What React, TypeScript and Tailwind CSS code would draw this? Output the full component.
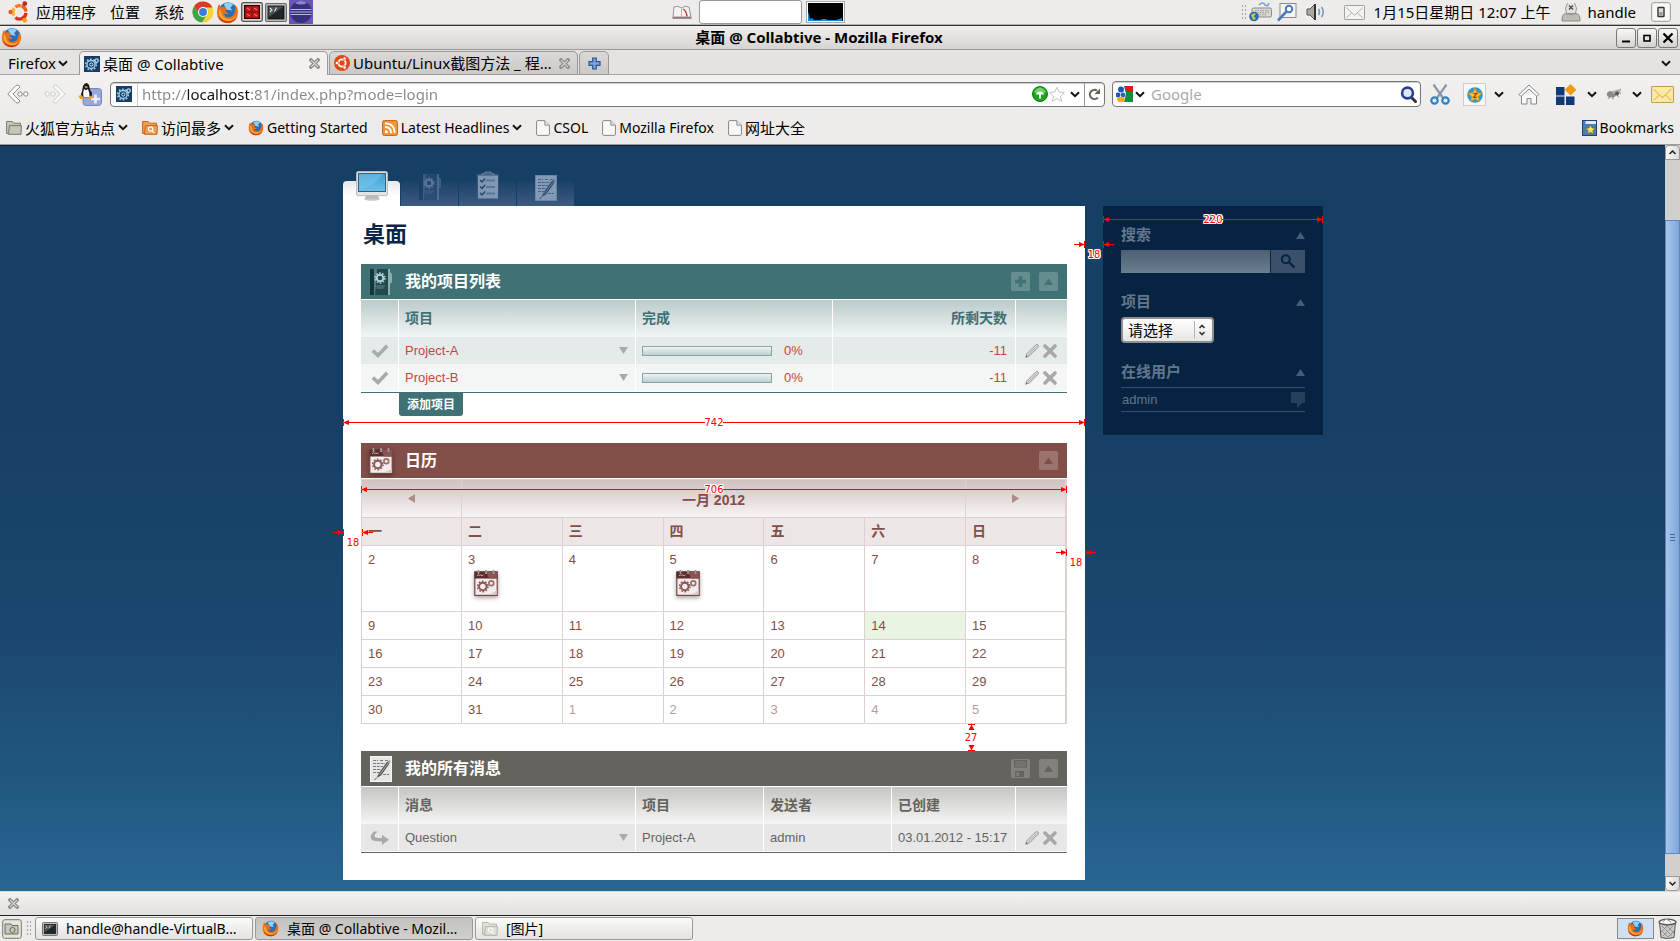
import { useState } from "react";
import type { ReactNode } from "react";

const UI = "font-['Noto_Sans','Noto_Sans_CJK_SC',sans-serif]";
const WEB = "font-['Liberation_Sans','Noto_Sans_CJK_SC',sans-serif]";

/* ---------- desktop and browser icons ---------- */

function Chevron({ label }: { label?: string }) {
  return (
    <svg width="10" height="7" viewBox="0 0 10 7" fill="none" stroke="#111" strokeWidth="2" className="shrink-0" aria-label={label}>
      <path d="M1 1.2 L5 5.2 L9 1.2" />
    </svg>
  );
}

function FirefoxIcon({ size }: { size: number }) {
  return (
    <svg width={size} height={size} viewBox="0 0 24 24" className="shrink-0">
      <circle cx="12.5" cy="11" r="9.8" fill="#2a6db5" />
      <path d="M8 3 Q13 0.5 18 3.4 L15 7 L17 10 L11 9 Z" fill="#8fd0f3" />
      <path d="M2.2 5 Q1.3 8 1 12 Q1.2 22.8 12 23 Q22.8 22.6 23 11.5 Q22.8 6.5 20 3.6 Q21.2 8 19.6 11 Q18.6 16.8 13 17 Q8.6 16.6 8.4 13 Q11 14.6 13.4 12.6 Q10.8 12.4 9.6 10.4 L12 8.4 Q9.6 7.8 8.4 6 Q6 5.6 5.2 6.6 Q4 6.4 3.8 3.2 Z" fill="#e8701a" />
      <path d="M2.8 9 Q2 19 11.5 20.8 Q19.5 21 21.6 13 Q18.6 19.4 12.6 18.8 Q6.5 18 5.6 11.6 Q4.6 8 2.8 9 Z" fill="#f9a72b" />
      <path d="M2 15 Q4.6 22.6 12 23 Q18.5 22.8 21.4 18 Q17 22 11 21 Q5 20 2 15 Z" fill="#c23c12" />
    </svg>
  );
}

function UbuntuMark({ size, mono }: { size: number; mono?: boolean }) {
  if (mono) {
    return (
      <svg width={size} height={size} viewBox="0 0 16 16" className="shrink-0">
        <circle cx="8" cy="8" r="8" fill="#dd4814" />
        <circle cx="8" cy="8" r="3.6" fill="none" stroke="#fff" strokeWidth="1.8" />
        <g fill="#fff" stroke="#dd4814" strokeWidth="0.7">
          <circle cx="2.9" cy="8" r="1.7" />
          <circle cx="10.6" cy="3.5" r="1.7" />
          <circle cx="10.6" cy="12.5" r="1.7" />
        </g>
      </svg>
    );
  }
  return (
    <svg width={size} height={size} viewBox="0 0 24 24" className="shrink-0">
      <g fill="none" strokeWidth="3.6">
        <path d="M8 6.6 A7 7 0 0 1 14.5 5.4" stroke="#f47a20" />
        <path d="M6.6 16 A7 7 0 0 1 6.8 8" stroke="#f9b233" />
        <path d="M19.6 13 A7 7 0 0 1 8 18" stroke="#d9341a" />
        <path d="M15 5.6 A7 7 0 0 1 19.6 11.6" stroke="#e8601c" />
      </g>
      <circle cx="2.8" cy="12" r="2.4" fill="#e8601c" />
      <circle cx="18.3" cy="2.9" r="2.6" fill="#c0282d" />
      <circle cx="18.3" cy="21" r="2.6" fill="#f9a51a" />
    </svg>
  );
}

function ChromeIcon() {
  return (
    <svg width="22" height="22" viewBox="0 0 22 22" className="shrink-0">
      <circle cx="11" cy="11" r="10.5" fill="#f6d33c" />
      <path d="M2 5.5 A10.5 10.5 0 0 1 20.5 6.5 L11 6.5 L7 13 Z" fill="#d93a2b" />
      <path d="M1.9 5.6 A10.5 10.5 0 0 0 10 21.5 L14.5 14 L7.2 13.4 Z" fill="#3aa648" />
      <circle cx="11" cy="11" r="5" fill="#fff" />
      <circle cx="11" cy="11" r="4" fill="#3b7ddd" />
    </svg>
  );
}

function RedGridIcon() {
  return (
    <svg width="22" height="20" viewBox="0 0 22 20" className="shrink-0">
      <rect x="0.7" y="0.7" width="20.6" height="18.6" rx="1.5" fill="#d5d3cf" stroke="#555" strokeWidth="1.3" />
      <rect x="3.5" y="3.5" width="15" height="13" fill="#7d0e10" stroke="#300" />
      <g fill="#c8181c">
        <rect x="4.5" y="4.5" width="6" height="5" />
        <rect x="11.5" y="4.5" width="6" height="5" />
        <rect x="4.5" y="10.5" width="6" height="5" />
        <rect x="11.5" y="10.5" width="6" height="5" />
      </g>
      <path d="M6 6 l3 2 M13 6 l3 2 M6 12 l3 2 M13 12 l3 2" stroke="#f4a0a0" strokeWidth="0.8" />
    </svg>
  );
}

function TerminalIcon({ width }: { width: number }) {
  return (
    <svg width={width} height={Math.round(width * 0.86)} viewBox="0 0 22 19" className="shrink-0">
      <rect x="0.7" y="0.7" width="20.6" height="17.6" rx="1" fill="#d8d8d6" stroke="#666" strokeWidth="1.3" />
      <rect x="3" y="3" width="16" height="13" fill="#20272a" stroke="#111" />
      <path d="M3.5 3.5 H18.5 L3.5 14 Z" fill="#4a5357" />
      <path d="M5 5 l2 2 l-2 2 M9.5 8.5 l2 -4" stroke="#e8e8e8" strokeWidth="1.1" fill="none" />
    </svg>
  );
}

function EclipseIcon() {
  return (
    <svg width="24" height="24" viewBox="0 0 24 24" className="shrink-0">
      <rect width="24" height="24" fill="#6d55b8" />
      <circle cx="12" cy="12" r="11" fill="#37307a" />
      <path d="M1.5 9.5 h21 M1 12 h22 M1.5 14.5 h21" stroke="#b8b4e8" strokeWidth="1.1" />
      <path d="M6 3 Q12 -1 18 3 Q12 6 6 3" fill="#8f86d0" />
    </svg>
  );
}

function Favicon() {
  return (
    <svg width="16" height="16" viewBox="0 0 16 16" className="shrink-0">
      <rect width="16" height="16" fill="#1c3a66" />
      <circle cx="7" cy="8.5" r="4" fill="none" stroke="#8fd0ea" strokeWidth="1.4" />
      <circle cx="7" cy="8.5" r="5.3" fill="none" stroke="#8fd0ea" strokeWidth="1.6" strokeDasharray="1.8 1.53" />
      <circle cx="7.3" cy="8.5" r="1.6" fill="none" stroke="#d8f2fb" />
      <circle cx="12.6" cy="4.6" r="1.7" fill="none" stroke="#a8e0f2" strokeWidth="1.3" />
    </svg>
  );
}

function CloseGlyph({ size }: { size: number }) {
  return (
    <svg width={size} height={size} viewBox="0 0 11 11" className="shrink-0">
      <path d="M2 2 L9 9 M9 2 L2 9" stroke="#8a8a88" strokeWidth="3.6" strokeLinecap="square" />
      <path d="M2 2 L9 9 M9 2 L2 9" stroke="#cfcfcd" strokeWidth="1.3" />
    </svg>
  );
}

function MailIcon({ width, height, fill, stroke, line }: { width: number; height: number; fill: string; stroke: string; line: string }) {
  return (
    <svg width={width} height={height} viewBox="0 0 22 16" preserveAspectRatio="none" className="shrink-0">
      <rect x="0.5" y="0.5" width="21" height="15" rx="0.8" fill={fill} stroke={stroke} />
      <path d="M2.5 3 L11 11 L19.5 3 M2.5 13.5 L8 8.5 M19.5 13.5 L14 8.5" fill="none" stroke={line} />
    </svg>
  );
}

function GripDots() {
  return <span className="h-[17px] w-[5px] shrink-0 bg-[radial-gradient(#aaa_30%,transparent_35%)] bg-[size:3px_4px]" />;
}

function FolderIcon({ color, edge, mark }: { color: string; edge: string; mark?: boolean }) {
  return (
    <svg width="16" height="15" viewBox="0 0 16 15" className="shrink-0">
      <path d="M0.6 13.5 V1.5 H6.2 L7.5 3.2 H14.5 V13.5 Z" fill={color} stroke={edge} />
      <path d="M2.5 14.3 L3.4 5.6 H15.4 L15 14.3 Z" fill={color} stroke={edge} />
      {mark && (
        <g fill="none" stroke="#fff" strokeWidth="1.2">
          <circle cx="8.6" cy="9" r="2.2" />
          <path d="M10.2 10.8 L12.2 13" />
        </g>
      )}
    </svg>
  );
}

function PageIcon() {
  return (
    <svg width="14" height="16" viewBox="0 0 14 16" className="shrink-0">
      <path d="M0.6 1.8 Q0.6 0.6 1.8 0.6 H8.8 L13.4 5.2 V14.2 Q13.4 15.4 12.2 15.4 H1.8 Q0.6 15.4 0.6 14.2 Z" fill="#f8f8f8" stroke="#888" />
      <path d="M8.8 0.6 V5.2 H13.4" fill="#dcdcdc" stroke="#999" />
    </svg>
  );
}

/* ---------- dashboard icons ---------- */

function MonitorIcon() {
  return (
    <svg width="32" height="30" viewBox="0 0 32 30" className="shrink-0">
      <defs>
        <linearGradient id="scr" x1="0" y1="0" x2="0" y2="1">
          <stop offset="0" stopColor="#3f9fd2" />
          <stop offset="1" stopColor="#6bc0ea" />
        </linearGradient>
      </defs>
      <ellipse cx="16" cy="28" rx="8" ry="1.8" fill="#c9c9c9" />
      <path d="M10.5 24 H21.5 L23.5 27.6 H8.5 Z" fill="#b9b9b9" />
      <rect x="0.6" y="0.6" width="30.8" height="24" rx="1.5" fill="#e3e3e1" stroke="#b9bcbe" />
      <rect x="2.5" y="2.5" width="27" height="18" fill="url(#scr)" stroke="#35607c" />
      <path d="M3 18 Q18 16 27 3 H3 Z" fill="#86cdf0" opacity="0.4" />
    </svg>
  );
}

function BinderIcon({ dim }: { dim?: boolean }) {
  return (
    <svg width="24" height="28" viewBox="0 0 24 28" className="shrink-0" opacity={dim ? 0.75 : 1}>
      <rect x="1" y="1" width="19" height="26" fill={dim ? "#284c72" : "#24484b"} />
      <path d="M1 1 H5 V27 H1 Z" fill={dim ? "#1c3d62" : "#15373a"} />
      <path d="M5 1 H8 L6 27 H5 Z" fill={dim ? "#46658a" : "#56807f"} />
      <rect x="19" y="1" width="2" height="26" fill={dim ? "#58749a" : "#86b0b0"} />
      <path d="M21 4 L23 6 V14 L21 16 Z" fill={dim ? "#47678e" : "#86b0b0"} />
      <circle cx="11" cy="10" r="3.3" fill="none" stroke={dim ? "#6d89ab" : "#a9d0d2"} strokeWidth="2" />
      <circle cx="11" cy="10" r="4.9" fill="none" stroke={dim ? "#6d89ab" : "#a9d0d2"} strokeWidth="1.5" strokeDasharray="1.7 1.38" />
      <path d="M6 18 h10 M7.5 20 h7" stroke={dim ? "#4c6c92" : "#5f8b8d"} />
    </svg>
  );
}

function ClipboardIcon() {
  return (
    <svg width="24" height="30" viewBox="0 0 24 30" className="shrink-0">
      <rect x="0.8" y="2.8" width="22" height="26" rx="1" fill="#345578" />
      <rect x="2" y="4.5" width="20" height="23" fill="#8096b3" />
      <path d="M6 5 V2.6 H9 V1 H15 V2.6 H18 V5 Z" fill="#45648a" stroke="#6f88a8" strokeWidth="0.8" />
      <path d="M10 9.5 h9 M10 16 h9 M10 22.5 h9" stroke="#5a7698" strokeWidth="1.8" />
      <path d="M4 9 l2 2 l3 -3.4 M4 15.5 l2 2 l3 -3.4 M4 22 l2 2 l3 -3.4" fill="none" stroke="#23446b" strokeWidth="1.5" />
    </svg>
  );
}

function NoteIcon({ dim }: { dim?: boolean }) {
  const paper = dim ? "#8399b5" : "#e6e6e4";
  const ink = dim ? "#2c4c74" : "#55544f";
  return (
    <svg width="22" height="26" viewBox="0 0 22 26" className="shrink-0">
      <rect x="0.5" y="0.5" width="21" height="25" fill={paper} stroke={dim ? "#6c84a4" : "#f6f6f6"} />
      <path d="M3 4.5 h5 m2 0 h3 m2 0 h3 M3 7.5 h12 M3 10.5 h10 M3 13.5 h8 M3 16.5 h6 M13 18.5 h6" stroke={ink} strokeWidth="0.9" strokeDasharray="3 0.8" opacity="0.8" />
      <path d="M20.5 4 L16.5 6.5 L9 17 L6.5 22 L11 19.5 L18.5 9 Z" fill={ink} />
      <path d="M20 4.6 L9.5 18.8" stroke={paper} strokeWidth="0.6" />
      <path d="M6.5 22 L4.5 24" stroke={ink} />
    </svg>
  );
}

function CalendarIcon() {
  return (
    <svg width="24" height="28" viewBox="0 0 24 28" className="shrink-0 drop-shadow-[0_2px_2px_rgba(0,0,0,0.35)]">
      <rect x="0.8" y="3" width="22.4" height="23.4" fill="#f3ecee" stroke="#7a4640" strokeWidth="1.2" />
      <rect x="0.5" y="2.5" width="23" height="7" fill="#5c2e2b" />
      <path d="M12 2.5 H23.5 V9.5 H15 Z" fill="#8a5450" />
      <path d="M3 7 l1.4 -1.4 l1.2 1.4 l1.2 -1.4 l1.2 1.4 l1.6 -1.4" fill="none" stroke="#d8bcbc" strokeWidth="0.8" />
      <path d="M4.5 1 v4 M12 1 v4 M19.5 1 v4" stroke="#9b9b9b" strokeWidth="1.8" />
      <circle cx="8.8" cy="17.5" r="3.7" fill="none" stroke="#8a5a56" strokeWidth="2" />
      <circle cx="8.8" cy="17.5" r="5.2" fill="none" stroke="#8a5a56" strokeWidth="1.4" strokeDasharray="1.8 1.47" />
      <circle cx="17.3" cy="14.3" r="2.4" fill="none" stroke="#9a6e6a" strokeWidth="1.7" />
      <path d="M12 25.6 Q20 24.6 22.8 20.4 V25.6 Z" fill="#d6c8ca" />
    </svg>
  );
}

function BoxButton({ kind, label, bg, ink }: { kind: "plus" | "up" | "disk"; label: string; bg: string; ink: string }) {
  return (
    <button type="button" aria-label={label} className="shrink-0">
      <svg width="19" height="19" viewBox="0 0 19 19">
        <rect width="19" height="19" rx="1.5" fill={bg} />
        {kind === "plus" && <path d="M4 9.5 H15 M9.5 4 V15" stroke={ink} strokeWidth="3.4" />}
        {kind === "up" && <path d="M5 13 L9.5 6.5 L14 13 Z" fill={ink} />}
        {kind === "disk" && (
          <g fill={ink}>
            <path d="M3 1 H16 V8.6 H3 Z" />
            <path d="M4 3 h11 M4 5 h11 M4 7 h11" stroke={bg} />
            <path d="M4 12 H13 V18 H4 Z" />
            <path d="M5.5 13.2 H8 V17 H5.5 Z" fill={bg} />
          </g>
        )}
      </svg>
    </button>
  );
}

function RowTools() {
  return (
    <div className="flex items-center justify-end gap-1 pr-[10px]">
      <button type="button" aria-label="编辑">
        <svg width="14" height="14" viewBox="0 0 14 14">
          <path d="M0.8 13.2 L2 9.6 L10.6 1 Q12 0 13 1 Q14 2 13 3.4 L4.4 12 Z" fill="#dcdcdc" stroke="#999" />
          <path d="M3.4 10.8 L11.6 2.6" stroke="#aaa" />
          <path d="M0.5 13.5 L1.4 11 L3 12.6 Z" fill="#777" />
        </svg>
      </button>
      <button type="button" aria-label="删除">
        <svg width="14" height="14" viewBox="0 0 14 14">
          <path d="M2 2 L12 12 M12 2 L2 12" stroke="#a8a8a8" strokeWidth="3.6" strokeLinecap="round" />
        </svg>
      </button>
    </div>
  );
}

function DownMark() {
  return (
    <svg width="9" height="7" viewBox="0 0 9 7" className="mr-px shrink-0">
      <path d="M0 0 H9 L4.5 7 Z" fill="#a9abab" />
    </svg>
  );
}

/* ---------- dimension marks ---------- */

const HALO = "[text-shadow:1px_0_#fff,-1px_0_#fff,0_1px_#fff,0_-1px_#fff,1px_1px_#fff,-1px_-1px_#fff,1px_-1px_#fff,-1px_1px_#fff]";
const MARK = `text-[11px] leading-[11px] text-[#f00] font-['DejaVu_Sans_Condensed','Noto_Sans',sans-serif] ${HALO}`;

function Head({ flip }: { flip?: boolean }) {
  return (
    <svg width="6" height="7" viewBox="0 0 6 7" className="shrink-0">
      {flip ? <path d="M0 1 L6 3.5 L0 6 Z M5 0 h1 v7 h-1 Z" fill="#f00" /> : <path d="M6 1 L0 3.5 L6 6 Z M0 0 h1 v7 h-1 Z" fill="#f00" />}
    </svg>
  );
}

function Span({ label, className }: { label: string; className: string }) {
  return (
    <div className={`pointer-events-none absolute inset-x-0 z-10 flex h-[7px] items-center ${className}`}>
      <Head />
      <i className="h-px flex-1 bg-[#f00]" />
      <span className={MARK}>{label}</span>
      <i className="h-px flex-1 bg-[#f00]" />
      <Head flip />
    </div>
  );
}

function GapMark({ label, className }: { label: string; className: string }) {
  return (
    <div className={`pointer-events-none absolute z-10 flex w-[40px] flex-col items-center gap-px ${className}`}>
      <div className="flex h-[7px] w-full items-center">
        <i className="h-px w-[5px] bg-[#f00]" />
        <Head flip />
        <i className="flex-1" />
        <Head />
        <i className="h-px w-[5px] bg-[#f00]" />
      </div>
      <span className={MARK}>{label}</span>
    </div>
  );
}

/* ---------- dashboard ---------- */

const projects = [
  { name: "Project-A", done: 0, days: -11 },
  { name: "Project-B", done: 0, days: -11 },
];

const weekdays = ["一", "二", "三", "四", "五", "六", "日"];
const weeks = [
  [2, 3, 4, 5, 6, 7, 8],
  [9, 10, 11, 12, 13, 14, 15],
  [16, 17, 18, 19, 20, 21, 22],
  [23, 24, 25, 26, 27, 28, 29],
  [30, 31, 1, 2, 3, 4, 5],
];

function SectionHead({ icon, title, color, children }: { icon: ReactNode; title: string; color: string; children: ReactNode }) {
  return (
    <header className={`flex h-[35px] items-center pr-[9px] ${color}`}>
      <span className="flex w-[44px] shrink-0 justify-center pr-[5px]">{icon}</span>
      <h2 className="flex-1 text-[16px] font-bold text-white">{title}</h2>
      <div className="flex gap-[9px]">{children}</div>
    </header>
  );
}

function ProjectSection() {
  const th = "border-r border-white bg-linear-to-b from-[#bacbca] to-[#f3f6f6] px-[6px] text-left text-[14px] font-bold text-[#3f7174] last:border-r-0";
  const td = "border-r border-white px-[6px] last:border-r-0";
  return (
    <section>
      <SectionHead icon={<BinderIcon />} title="我的项目列表" color="bg-[#407174]">
        <BoxButton kind="plus" label="添加" bg="#668d8f" ink="#407174" />
        <BoxButton kind="up" label="折叠" bg="#668d8f" ink="#407174" />
      </SectionHead>
      <div className="border-b border-[#407174] pb-px">
        <table className="mt-px w-full table-fixed border-separate border-spacing-0 text-[13px] text-[#c4473f]">
          <colgroup>
            <col className="w-[38px]" />
            <col />
            <col className="w-[197px]" />
            <col className="w-[183px]" />
            <col className="w-[51px]" />
          </colgroup>
          <thead>
            <tr className="h-[37px]">
              <th className={th} />
              <th className={th}>项目</th>
              <th className={th}>完成</th>
              <th className={`${th} pr-[8px]`}>
                <span className="block text-right">所剩天数</span>
              </th>
              <th className={th} />
            </tr>
          </thead>
          <tbody>
            {projects.map((p) => (
              <tr key={p.name} className="h-[27px] odd:bg-[#e5ebea] even:bg-[#f4f6f5]">
                <td className={td}>
                  <button type="button" aria-label={`完成 ${p.name}`} className="mx-auto block">
                    <svg width="18" height="14" viewBox="0 0 18 14">
                      <path d="M1.8 6.6 L7 11.4 L16.2 1.8" fill="none" stroke="#a9abab" strokeWidth="3.6" />
                    </svg>
                  </button>
                </td>
                <td className={td}>
                  <div className="flex items-center justify-between">
                    <a href={`#${p.name}`}>{p.name}</a>
                    <DownMark />
                  </div>
                </td>
                <td className={td}>
                  <div className="flex items-center gap-3">
                    <div className="h-[10px] w-[130px] border border-[#85a5a6] bg-linear-to-b from-[#eef3f3] to-[#bfd0d0]">
                      <div className="h-full bg-[#407174]" style={{ width: `${p.done}%` }} />
                    </div>
                    <span>{p.done}%</span>
                  </div>
                </td>
                <td className={`${td} pr-[8px] text-right`}>{p.days}</td>
                <td>
                  <RowTools />
                </td>
              </tr>
            ))}
          </tbody>
        </table>
      </div>
      <button type="button" className="ml-[38px] block h-[23px] w-[64px] rounded-b-[3px] bg-[#407174] text-center text-[12px] font-bold text-white">
        添加项目
      </button>
    </section>
  );
}

function CalendarSection() {
  const line = "border-[#dfd0d0]";
  return (
    <section className="relative">
      <SectionHead icon={<CalendarIcon />} title="日历" color="bg-[#824f48]">
        <BoxButton kind="up" label="折叠" bg="#9b726d" ink="#824f48" />
      </SectionHead>
      <table className={`mt-px w-full table-fixed border-separate border-spacing-0 border-t border-r ${line} text-left text-[13px] text-[#824f48]`}>
        <colgroup>
          <col className="w-[100px]" />
          <col />
          <col />
          <col />
          <col />
          <col />
          <col className="w-[101px]" />
        </colgroup>
        <thead>
          <tr className="h-[38px] bg-linear-to-b from-[#d1c0c0] to-[#f8f6f6]">
            <th className={`border-b border-l ${line}`}>
              <button type="button" aria-label="上个月" className="mx-auto block">
                <svg width="7" height="9" viewBox="0 0 7 9">
                  <path d="M7 0 V9 L0 4.5 Z" fill="#b08c88" />
                </svg>
              </button>
            </th>
            <th colSpan={5} className={`border-b border-l ${line} pt-[3px] text-center text-[14px] font-bold`}>
              一月 2012
            </th>
            <th className={`border-x border-b ${line}`}>
              <button type="button" aria-label="下个月" className="mx-auto block">
                <svg width="7" height="9" viewBox="0 0 7 9">
                  <path d="M0 0 V9 L7 4.5 Z" fill="#b08c88" />
                </svg>
              </button>
            </th>
          </tr>
          <tr className="h-[28px] bg-[#ede6e6]">
            {weekdays.map((d) => (
              <th key={d} className={`border-b border-l ${line} px-[6px] text-[14px] font-bold last:border-r`}>
                {d}
              </th>
            ))}
          </tr>
        </thead>
        <tbody>
          {weeks.map((week, w) => (
            <tr key={w} className={w === 0 ? "h-[66px]" : "h-[28px]"}>
              {week.map((day) => {
                const next = w === 4 && day < 8;
                const today = day === 14;
                const event = w === 0 && (day === 3 || day === 5);
                return (
                  <td
                    key={day}
                    className={`border-b border-l ${line} px-[6px] pt-[5px] align-top leading-[18px] last:border-r ${today ? "bg-[#e9f4e2]" : ""} ${next ? "text-[#b89c99]" : ""}`}
                  >
                    {day}
                    {event && (
                      <a href={`#day-${day}`} aria-label={`${day}`} className="ml-[6px] block h-[28px] w-[24px]">
                        <CalendarIcon />
                      </a>
                    )}
                  </td>
                );
              })}
            </tr>
          ))}
        </tbody>
      </table>
      <Span label="706" className="top-[43px]" />
      <div className="pointer-events-none absolute right-[89px] top-full z-10 flex h-[27px] w-[14px] flex-col items-center justify-between">
        <svg width="7" height="7" viewBox="0 0 7 7">
          <path d="M0 0 h7 v1 h-7 Z M3.5 0.5 L6.5 6 H0.5 Z" fill="#f00" />
        </svg>
        <span className={MARK}>27</span>
        <svg width="7" height="7" viewBox="0 0 7 7">
          <path d="M0 6 h7 v1 h-7 Z M3.5 6.5 L6.5 1 H0.5 Z" fill="#f00" />
        </svg>
      </div>
    </section>
  );
}

function MessageSection() {
  const th = "border-r border-white bg-linear-to-b from-[#c5c5c3] to-[#f6f6f5] px-[6px] text-left text-[14px] font-bold text-[#65635d] last:border-r-0";
  const td = "border-r border-white px-[6px] last:border-r-0";
  return (
    <section>
      <SectionHead icon={<NoteIcon />} title="我的所有消息" color="bg-[#65635d]">
        <BoxButton kind="disk" label="保存" bg="#83817c" ink="#65635d" />
        <BoxButton kind="up" label="折叠" bg="#83817c" ink="#65635d" />
      </SectionHead>
      <div className="border-b border-[#65635d] pb-px">
        <table className="mt-px w-full table-fixed border-separate border-spacing-0 text-[13px] text-[#65635d]">
          <colgroup>
            <col className="w-[38px]" />
            <col />
            <col className="w-[128px]" />
            <col className="w-[128px]" />
            <col className="w-[124px]" />
            <col className="w-[51px]" />
          </colgroup>
          <thead>
            <tr className="h-[37px]">
              <th className={th} />
              <th className={th}>消息</th>
              <th className={th}>项目</th>
              <th className={th}>发送者</th>
              <th className={th}>已创建</th>
              <th className={th} />
            </tr>
          </thead>
          <tbody>
            <tr className="h-[27px] bg-[#e7e7e7]">
              <td className={td}>
                <button type="button" aria-label="回复" className="mx-auto block">
                  <svg width="19" height="14" viewBox="0 0 19 14">
                    <path d="M4 0.5 Q-1.5 5 2 9 Q4 10.6 12 10.4 V14 L19 8.8 L12 3.8 V7 Q6 7.4 4.6 5.6 Q4 3.4 7.5 0.5 Z" fill="#a9a9a9" />
                  </svg>
                </button>
              </td>
              <td className={td}>
                <div className="flex items-center justify-between">
                  <a href="#question">Question</a>
                  <DownMark />
                </div>
              </td>
              <td className={td}>
                <a href="#Project-A">Project-A</a>
              </td>
              <td className={td}>
                <a href="#admin">admin</a>
              </td>
              <td className={`${td} whitespace-nowrap`}>03.01.2012 - 15:17</td>
              <td>
                <RowTools />
              </td>
            </tr>
          </tbody>
        </table>
      </div>
    </section>
  );
}

function SideHead({ children }: { children: ReactNode }) {
  return (
    <div className="mb-1 flex h-[22px] items-center justify-between">
      <h3 className="text-[15px] font-bold text-[#63768c]">{children}</h3>
      <button type="button" aria-label="折叠">
        <svg width="9" height="7" viewBox="0 0 9 7">
          <path d="M0 7 L4.5 0 L9 7 Z" fill="#465c77" />
        </svg>
      </button>
    </div>
  );
}

function Sidebar() {
  return (
    <aside className="relative w-[220px] shrink-0 bg-[#062342] px-[18px] pt-[18px] pb-[23px]">
      <Span label="220" className="top-[10px]" />
      <SideHead>搜索</SideHead>
      <form className="mb-[18px] flex h-[23px] gap-px">
        <input type="text" aria-label="搜索" className="min-w-0 flex-1 bg-linear-to-b from-[#4d5f73] to-[#6b7d91] px-1 text-[13px] text-white outline-none" />
        <button type="button" aria-label="开始搜索" className="flex w-[34px] items-center justify-center bg-[#3a506b]">
          <svg width="16" height="15" viewBox="0 0 16 15" fill="none" stroke="#062342">
            <circle cx="5.8" cy="5.2" r="4" strokeWidth="2" />
            <path d="M8.8 8 L14.6 13.6" strokeWidth="2.4" />
          </svg>
        </button>
      </form>
      <SideHead>项目</SideHead>
      <div className="relative mb-[18px] h-[26px] w-[93px]">
        <select aria-label="项目" defaultValue="请选择" className={`h-full w-full appearance-none rounded-[4px] border-2 border-[#8f8f8f] bg-linear-to-b from-white to-[#e6e6e5] pl-[5px] text-[15px] leading-[20px] text-black ${UI}`}>
          <option>请选择</option>
          <option>Project-A</option>
          <option>Project-B</option>
        </select>
        <svg width="16" height="18" viewBox="0 0 16 18" fill="none" className="pointer-events-none absolute top-1 right-1">
          <path d="M0.5 0 V18" stroke="#b5b5b5" />
          <path d="M5.5 7 L8 4.5 L10.5 7 M5.5 11 L8 13.5 L10.5 11" stroke="#333" strokeWidth="1.6" />
        </svg>
      </div>
      <SideHead>在线用户</SideHead>
      <div className="flex h-[25px] items-center justify-between border-y border-[#364f6e] text-[13px] text-[#63768c]">
        <a href="#admin" className="pl-px">
          admin
        </a>
        <svg width="14" height="16" viewBox="0 0 14 16">
          <path d="M0 0 H14 V11 H11 L6 16 V11 H0 Z" fill="#263f5c" />
        </svg>
      </div>
    </aside>
  );
}

function Dashboard() {
  const [tab, setTab] = useState(0);
  const tabs: { name: string; icon: ReactNode }[] = [
    { name: "桌面", icon: <MonitorIcon /> },
    { name: "项目", icon: <BinderIcon dim /> },
    { name: "任务", icon: <ClipboardIcon /> },
    { name: "消息", icon: <NoteIcon dim /> },
  ];
  return (
    <main className={`flex-1 border-t border-[#0a2540] bg-[linear-gradient(#163f65_36%,#1b476e_66%,#225a82_88%,#27628f_95%,#286592)] pt-[25px] pb-[11px] pl-px ${WEB}`}>
      <div className="mx-auto w-full max-w-[980px]">
        <nav className="flex h-[35px] items-end gap-px">
          {tabs.map((t, i) => (
            <button
              key={t.name}
              type="button"
              aria-label={t.name}
              onClick={() => setTab(i)}
              className={`flex h-[25px] w-[57px] items-end justify-center rounded-t-[4px] pb-[5px] ${i === tab ? "bg-linear-to-b from-[#e4e9ee] to-white to-60%" : "bg-linear-to-b from-[#1b4168] to-[#3d5b80]"}`}
            >
              {t.icon}
            </button>
          ))}
        </nav>
        <div className="flex items-start gap-[18px]">
          <div className="relative min-w-0 flex-1 bg-white px-[18px] pb-[27px]">
            <h1 className="h-[58px] px-[2px] text-[22px] leading-[58px] font-bold text-[#0a2548]">桌面</h1>
            <div className="flex flex-col gap-[27px]">
              <ProjectSection />
              <CalendarSection />
              <MessageSection />
            </div>
            <Span label="742" className="top-[213px]" />
            <GapMark label="18" className="-left-[10px] top-[323px]" />
            <GapMark label="18" className="-right-[11px] top-[343px]" />
            <GapMark label="18" className="-right-[29px] top-[35px]" />
          </div>
          <Sidebar />
        </div>
      </div>
    </main>
  );
}

/* ---------- desktop shell ---------- */

function DesktopPanel() {
  return (
    <div className="flex h-[26px] items-start border-b border-[#333] bg-[#edecea] text-[15px] leading-[24px] shadow-[inset_0_-1px_#b3b1ad]">
      <div className="flex h-[24px] w-2/5 shrink-0 items-center pl-2">
        <UbuntuMark size={22} />
        <button type="button" className="ml-[6px]">应用程序</button>
        <button type="button" className="ml-[14px]">位置</button>
        <button type="button" className="mr-2 ml-[14px]">系统</button>
        <div className="flex items-center gap-[2px]">
          <ChromeIcon />
          <FirefoxIcon size={23} />
          <RedGridIcon />
          <TerminalIcon width={22} />
          <EclipseIcon />
        </div>
      </div>
      <div className="flex h-[24px] flex-1 items-center">
        <svg width="20" height="14" viewBox="0 0 20 14" className="mr-[7px]">
          <path d="M1 12 L2 2 Q6 0 9.5 3 Q13 0 17 2 L19 12 Z" fill="#f3f3f1" stroke="#99948e" />
          <path d="M9.5 3 V12" stroke="#b9b4ae" />
          <path d="M0.5 13 H19.5" stroke="#7b5f66" strokeWidth="1.4" />
          <path d="M11 4 Q14.5 6 15 11.5" fill="none" stroke="#d03238" strokeWidth="1.4" />
        </svg>
        <div className="mr-[4px] h-[24px] w-[103px] rounded-[3px] border border-[#999] bg-white" />
        <svg width="39" height="22" viewBox="0 0 39 22">
          <rect x="0.5" y="0.5" width="38" height="21" fill="#fff" stroke="#aaa" />
          <rect x="2" y="2" width="35" height="18" fill="#000" />
          <path d="M2 20 V11 L3 13 L4 18 L6 17 L8 19 H14 L16 18 H20 L22 19 H30 L33 18 L36 17 V20 Z" fill="#1187d8" />
        </svg>
      </div>
      <div className="flex h-[24px] shrink-0 items-center pr-[9px]">
        <GripDots />
        <svg width="23" height="20" viewBox="0 0 23 20" className="ml-[3px]">
          <path d="M10 3 Q14 -1 16 3 Q19 5 20 1" fill="none" stroke="#7aa5d2" strokeWidth="1.6" />
          <rect x="3" y="6" width="19.5" height="9" rx="1.5" fill="#d8d8d4" stroke="#8a8a86" />
          <path d="M6 8.7 h14 M6 10.7 h14 M8 12.7 h10" stroke="#999" strokeDasharray="1.5 1" />
          <circle cx="5" cy="14.5" r="4.8" fill="#2c6cae" />
          <path d="M2 13 Q5 10 7 12 L5 14 L7 17 L4 18 Z" fill="#b9c74a" />
        </svg>
        <svg width="20" height="20" viewBox="0 0 20 20" className="ml-[5px]">
          <rect x="3" y="1.5" width="16" height="14" fill="#f4f4f2" stroke="#8a8a86" />
          <circle cx="12" cy="7" r="3.2" fill="#fff" stroke="#4b7ab8" strokeWidth="2" />
          <path d="M10 9 L1 18.5" stroke="#4b7ab8" strokeWidth="2.6" />
        </svg>
        <svg width="20" height="20" viewBox="0 0 20 20" className="ml-[9px]">
          <path d="M1 7 H4 L9 2 V18 L4 13 H1 Z" fill="#a8a8a4" stroke="#555" />
          <path d="M9 2 V18" stroke="#333" strokeWidth="2" />
          <path d="M12.5 7 Q14.5 10 12.5 13 M15.5 5 Q19 10 15.5 15" fill="none" stroke="#6d97c6" strokeWidth="1.5" />
        </svg>
        <span className="ml-[18px]">
          <MailIcon width={21} height={15} fill="#f3f3f1" stroke="#999" line="#aaa" />
        </span>
        <time className="ml-[9px]">1月15日星期日 12:07 上午</time>
        <svg width="20" height="20" viewBox="0 0 20 20" className="ml-[11px]">
          <path d="M6.5 1 Q3 6 5.5 11.5 H14.5 Q17 6 13.5 1" fill="#e4e2dd" stroke="#9b9994" />
          <path d="M8 3.5 l4 4 M12 3.5 l-4 4" stroke="#444" strokeWidth="1.2" />
          <path d="M1 19 Q0.5 12 5 11.5 Q10 13.5 15 11.5 Q19.5 12 19 19 Z" fill="#bfbcb4" stroke="#8d8b86" />
        </svg>
        <span className="ml-[6px]">handle</span>
        <svg width="20" height="20" viewBox="0 0 20 20" className="ml-[15px]">
          <rect x="0.7" y="0.7" width="18.6" height="18.6" rx="2" fill="#f8f8f7" stroke="#999" />
          <rect x="7" y="5.5" width="6" height="9" rx="0.5" fill="#ddd" stroke="#333" strokeWidth="1.4" />
          <rect x="8.5" y="10" width="3" height="3.5" fill="#999" />
        </svg>
      </div>
    </div>
  );
}

function TitleBar() {
  const btn = "flex h-[20px] w-[20px] items-center justify-center rounded-[3px] border border-[#777] bg-linear-to-b from-[#f8f8f7] to-[#d4d2cf]";
  return (
    <div className="flex h-[24px] items-center border-b border-[#999] bg-linear-to-b from-[#f0efee] to-[#d6d4d1] pr-[2px] pl-[1px] text-[15px] font-bold">
      <FirefoxIcon size={21} />
      <h1 className="flex-1 text-center leading-[23px]">桌面 @ Collabtive - Mozilla Firefox</h1>
      <div className="flex gap-px">
        <button type="button" aria-label="最小化" className={btn}>
          <svg width="12" height="12" viewBox="0 0 12 12">
            <path d="M2 9.5 H10" stroke="#000" strokeWidth="2" />
          </svg>
        </button>
        <button type="button" aria-label="最大化" className={btn}>
          <svg width="12" height="12" viewBox="0 0 12 12">
            <rect x="3" y="3.5" width="6" height="5.5" fill="none" stroke="#000" strokeWidth="1.6" />
          </svg>
        </button>
        <button type="button" aria-label="关闭" className={btn}>
          <svg width="12" height="12" viewBox="0 0 12 12">
            <path d="M1.5 1.5 L10.5 10.5 M10.5 1.5 L1.5 10.5" stroke="#000" strokeWidth="2.2" />
          </svg>
        </button>
      </div>
    </div>
  );
}

function TabStrip() {
  return (
    <div className="flex h-[25px] items-end bg-[#e5e3e1] pr-[9px] text-[15px] shadow-[inset_0_-1px_#a8a6a3]">
      <button type="button" className="flex h-[24px] w-[79px] items-center gap-[2px] pl-2 leading-[24px]">
        Firefox
        <Chevron />
      </button>
      <div className="flex h-[24px] w-[249px] items-center rounded-t-[5px] border border-b-0 border-[#999] bg-[#f2f1f0] pr-[7px] pl-[4px]">
        <Favicon />
        <span className="ml-[3px] flex-1 leading-[22px] whitespace-nowrap">桌面 @ Collabtive</span>
        <button type="button" aria-label="关闭标签页">
          <CloseGlyph size={11} />
        </button>
      </div>
      <div className="ml-px flex h-[24px] w-[249px] items-center rounded-t-[5px] border border-[#999] bg-linear-to-b from-[#dbd9d7] to-[#cbc9c6] pr-[7px] pl-[4px]">
        <UbuntuMark size={16} mono />
        <span className="ml-[3px] leading-[22px] whitespace-nowrap">Ubuntu/Linux截图方法 _ 程…</span>
        <button type="button" aria-label="关闭标签页" className="ml-auto">
          <CloseGlyph size={11} />
        </button>
      </div>
      <button type="button" aria-label="新标签页" className="ml-px flex h-[24px] w-[30px] items-center justify-center rounded-t-[5px] border border-[#999] bg-linear-to-b from-[#dbd9d7] to-[#cbc9c6]">
        <svg width="13" height="13" viewBox="0 0 13 13">
          <path d="M4.7 1 H8.3 V4.7 H12 V8.3 H8.3 V12 H4.7 V8.3 H1 V4.7 H4.7 Z" fill="#7ba2d3" stroke="#2b559b" strokeWidth="1.2" />
        </svg>
      </button>
      <button type="button" aria-label="列出所有标签页" className="mb-2 ml-auto">
        <Chevron />
      </button>
    </div>
  );
}

function NavBar() {
  return (
    <div className="flex h-[38px] items-center bg-linear-to-b from-[#f2f1f0] to-[#edecea] pr-[6px] pl-[7px] text-[15px]">
      <button type="button" aria-label="后退">
        <svg width="22" height="20" viewBox="0 0 22 20" fill="#fff" stroke="#888">
          <path d="M11.5 1 L13 3 L6 10 L13 17 L11.5 19 L9 18.5 L0.8 10 L9 1.5 Z" />
          <circle cx="13" cy="10" r="2.2" />
          <circle cx="18.8" cy="10" r="2.2" />
        </svg>
      </button>
      <button type="button" aria-label="前进" className="ml-[15px]">
        <svg width="22" height="20" viewBox="0 0 22 20" fill="#f6f6f5" stroke="#ccc">
          <path d="M10.5 1 L9 3 L16 10 L9 17 L10.5 19 L13 18.5 L21.2 10 L13 1.5 Z" />
          <circle cx="9" cy="10" r="2.2" />
          <circle cx="3.2" cy="10" r="2.2" />
        </svg>
      </button>
      <button type="button" aria-label="添加书签" className="mr-[8px] ml-[12px]">
        <svg width="24" height="24" viewBox="0 0 24 24">
          <rect x="5" y="6.5" width="18.5" height="17" rx="3" fill="#98a8dc" stroke="#7788c4" />
          <path d="M17.5 12.5 V21.5 M13 17 H22" stroke="#fff" strokeWidth="2.6" opacity="0.8" />
          <path d="M5 4 Q8 -1.5 11 3 Q11.5 8 14 11 Q14 15 12 16 H4 Q2 13 4 9.5 Z" fill="#16161a" />
          <path d="M6 7 Q8 9 10 7 Q12 11 11.5 15.5 H5.5 Q4.5 11 6 7 Z" fill="#fff" />
          <path d="M6.4 4.8 L8 4 L10 5 L8 6.6 Z" fill="#f0a020" />
          <path d="M0.5 14 L3.5 13 L6.5 17 L2 17 Z M10 17 L12 13.5 L15.5 15.6 L12.5 17.5 Z" fill="#f0a020" />
        </svg>
      </button>
      <div className="flex h-[25px] min-w-0 flex-1 items-center rounded-[4px] border border-[#777] bg-white pl-[5px] shadow-[inset_0_1px_1px_#ccc]">
        <Favicon />
        <input
          type="text"
          aria-label="网址"
          defaultValue="http://localhost:81/index.php?mode=login"
          className="ml-[5px] h-full min-w-0 flex-1 border-l border-[#ccc] bg-[linear-gradient(90deg,#888_49px,#111_49px,#111_113px,#888_113px)] bg-clip-text pl-1 text-transparent caret-black outline-none"
        />
        <svg width="16" height="16" viewBox="0 0 16 16">
          <circle cx="8" cy="8" r="7.5" fill="#18a818" stroke="#0b7a10" />
          <path d="M2 6 Q8 -3 14 6 Q8 9 2 6" fill="#9be58f" opacity="0.7" />
          <path d="M3.5 8.5 Q8 2.5 12.5 8.5 H9 V12.5 H7 V8.5 Z" fill="#fff" />
        </svg>
        <svg width="18" height="17" viewBox="0 0 18 17">
          <path d="M9 1.2 L11.2 6 L16.3 6.5 L12.5 10 L13.6 15.4 L9 12.6 L4.4 15.4 L5.5 10 L1.7 6.5 L6.8 6 Z" fill="#fff" stroke="#c4c4c4" />
        </svg>
        <button type="button" aria-label="历史记录" className="mr-[4px] ml-[4px]">
          <Chevron />
        </button>
        <button type="button" aria-label="刷新" className="flex h-full w-[20px] items-center justify-center border-l border-[#999]">
          <svg width="13" height="13" viewBox="0 0 13 13">
            <path d="M9.8 9.6 A4.6 4.6 0 1 1 9 2.6" fill="none" stroke="#666158" strokeWidth="2" />
            <path d="M6.5 6 H12 V0.5 Z" fill="#666158" />
          </svg>
        </button>
      </div>
      <div className="ml-[7px] flex h-[26px] w-[309px] items-center rounded-[4px] border border-[#777] bg-white pr-[3px] pl-[3px] shadow-[inset_0_1px_1px_#ccc]">
        <svg width="17" height="16" viewBox="0 0 17 16">
          <rect x="6" width="11" height="16" fill="#0f8f3c" />
          <path d="M9 0 H17 V6 H11 Z" fill="#e01818" />
          <path d="M0 0 H8 L10 8 L8 16 H0 Z" fill="#fff" />
          <circle cx="5" cy="3.4" r="3" fill="#1d55b4" />
          <circle cx="2" cy="9" r="2.4" fill="#1d55b4" />
          <circle cx="7" cy="9" r="2.4" fill="#2a63c4" />
          <ellipse cx="5" cy="13.4" rx="4" ry="2.6" fill="#f2ac16" />
        </svg>
        <button type="button" aria-label="搜索引擎" className="ml-[2px]">
          <Chevron />
        </button>
        <input type="text" aria-label="搜索" placeholder="Google" className="ml-[6px] h-full min-w-0 flex-1 outline-none placeholder:text-[#aaa]" />
        <button type="button" aria-label="搜索">
          <svg width="17" height="17" viewBox="0 0 17 17">
            <path d="M11 11 L15.5 15.5" stroke="#333" strokeWidth="3" strokeLinecap="round" />
            <circle cx="7.5" cy="7" r="5.4" fill="#dce8fa" stroke="#2b3f92" strokeWidth="2.6" />
          </svg>
        </button>
      </div>
      <svg width="20" height="21" viewBox="0 0 20 21" className="ml-[9px] shrink-0">
        <path d="M3.5 0.5 L13 14 M16.5 0.5 L7 14" stroke="#8498ac" strokeWidth="2.2" />
        <circle cx="4.5" cy="16.5" r="3.2" fill="none" stroke="#2e7fc4" strokeWidth="2.2" />
        <circle cx="15.5" cy="16.5" r="3.2" fill="none" stroke="#2e7fc4" strokeWidth="2.2" />
      </svg>
      <svg width="23" height="23" viewBox="0 0 23 23" className="mr-[8px] ml-[13px] shrink-0">
        <rect x="0.5" y="0.5" width="22" height="22" fill="#f7f7f7" stroke="#ccc" />
        <circle cx="12" cy="12" r="7.8" fill="#2f9bd0" />
        <path d="M12 5 L14 9.8 L19 10.2 L15.2 13.4 L16.4 18.4 L12 15.7 L7.6 18.4 L8.8 13.4 L5 10.2 L10 9.8 Z" fill="#f8c832" stroke="#e08a10" strokeWidth="0.8" />
        <path d="M10.4 10.6 H13.8 L10.4 14.4 H13.8" fill="none" stroke="#c03018" strokeWidth="1.1" />
      </svg>
      <Chevron />
      <svg width="22" height="21" viewBox="0 0 22 21" className="mr-[16px] ml-[14px] shrink-0" fill="#fafafa" stroke="#888">
        <path d="M3.5 10 V20 H9 V14.5 H13 V20 H18.5 V10" />
        <path d="M11 1 L21 10.5 L19 12.5 L11 5 L3 12.5 L1 10.5 Z" />
      </svg>
      <svg width="21" height="21" viewBox="0 0 21 21" className="mr-[10px] shrink-0">
        <g fill="#123a78">
          <rect y="3" width="8.5" height="8.5" />
          <rect y="12.5" width="8.5" height="8.5" />
          <rect x="10" y="12.5" width="8.5" height="8.5" />
        </g>
        <path d="M14.5 0 L20.5 5.8 L14.5 11.6 L8.7 5.8 Z" fill="#f39a14" />
      </svg>
      <Chevron />
      <svg width="17" height="14" viewBox="0 0 17 14" className="mr-[9px] ml-[9px] shrink-0">
        <ellipse cx="5.5" cy="7.2" rx="4.6" ry="3.2" fill="#8a8a8a" />
        <path d="M5 4.5 L15.5 1.5 L14.5 4.5 L8 7 Z" fill="#b0b0b0" />
        <path d="M3.5 9.8 L2.6 12 M7 10.2 V12.6 M11 8 L13 10.4 M12.5 5.5 L15 6.5" stroke="#666" strokeWidth="0.8" />
        <circle cx="11" cy="6.4" r="2" fill="#555" />
      </svg>
      <Chevron />
      <span className="ml-[9px]">
        <MailIcon width={23} height={17} fill="#fbe9a4" stroke="#b9a24a" line="#e0c050" />
      </span>
    </div>
  );
}

function Bookmark({ icon, children, menu, cjk }: { icon: ReactNode; children: ReactNode; menu?: boolean; cjk?: boolean }) {
  return (
    <button type="button" className={`flex items-center gap-[3px] leading-[24px] whitespace-nowrap ${cjk ? "text-[15px]" : "text-[14px]"}`}>
      {icon}
      {children}
      {menu && <Chevron />}
    </button>
  );
}

function BookmarkBar() {
  return (
    <div className="flex h-[32px] items-center justify-between border-b border-[#a09d98] bg-[#edecea] px-[6px] pb-[2px]">
      <div className="flex items-center gap-[14px]">
        <Bookmark cjk icon={<FolderIcon color="#c4c8b8" edge="#767a6a" />} menu>火狐官方站点</Bookmark>
        <Bookmark cjk icon={<FolderIcon color="#f0a050" edge="#c8641a" mark />} menu>访问最多</Bookmark>
        <Bookmark icon={<FirefoxIcon size={16} />}>Getting Started</Bookmark>
        <Bookmark
          menu
          icon={
            <svg width="16" height="16" viewBox="0 0 16 16" className="shrink-0">
              <rect x="0.5" y="0.5" width="15" height="15" rx="2" fill="#f0943a" stroke="#c86a18" />
              <circle cx="4.3" cy="11.8" r="1.5" fill="#fff" />
              <path d="M3 7 Q9 7 9 13 M3 3.4 Q12.6 3.4 12.6 13" fill="none" stroke="#fff" strokeWidth="1.8" />
            </svg>
          }
        >
          Latest Headlines
        </Bookmark>
        <Bookmark icon={<PageIcon />}>CSOL</Bookmark>
        <Bookmark icon={<PageIcon />}>Mozilla Firefox</Bookmark>
        <Bookmark cjk icon={<PageIcon />}>网址大全</Bookmark>
      </div>
      <Bookmark
        icon={
          <svg width="15" height="16" viewBox="0 0 15 16" className="shrink-0">
            <rect x="0.5" y="0.5" width="14" height="15" fill="#4e7cb8" stroke="#1f4276" />
            <path d="M3.5 1 H14 V4 H3.5 Z" fill="#dfe8f3" />
            <path d="M8.5 4.8 L10 8 L13.4 8.3 L10.8 10.6 L11.6 14 L8.5 12.2 L5.4 14 L6.2 10.6 L3.6 8.3 L7 8 Z" fill="#f7e05a" stroke="#6d6420" strokeWidth="0.6" />
          </svg>
        }
      >
        Bookmarks
      </Bookmark>
    </div>
  );
}

function ScrollBar() {
  const end = "flex h-[15px] items-center justify-center border border-[#999] bg-linear-to-r from-[#fafafa] to-[#dddbd9]";
  return (
    <div className="flex w-[15px] shrink-0 flex-col bg-[#d2d0ce]">
      <button type="button" aria-label="向上滚动" className={`${end} rounded-t-[4px]`}>
        <svg width="7" height="5" viewBox="0 0 7 5" fill="none" stroke="#222" strokeWidth="1.5">
          <path d="M0.5 4 L3.5 1 L6.5 4" />
        </svg>
      </button>
      <div className="flex flex-1 flex-col pt-[60px] pb-[22px]">
        <div className="flex flex-1 flex-col items-center justify-center gap-[2px] border border-[#6484b4] bg-linear-to-r from-[#a9c5ec] to-[#7fa6dc]">
          <i className="h-px w-[5px] bg-[#45679b]" />
          <i className="h-px w-[5px] bg-[#45679b]" />
          <i className="h-px w-[5px] bg-[#45679b]" />
        </div>
      </div>
      <button type="button" aria-label="向下滚动" className={`${end} rounded-b-[4px]`}>
        <svg width="7" height="5" viewBox="0 0 7 5" fill="none" stroke="#222" strokeWidth="1.5">
          <path d="M0.5 1 L3.5 4 L6.5 1" />
        </svg>
      </button>
    </div>
  );
}

function TaskBar() {
  const task = "flex h-[23px] w-[218px] items-center gap-[8px] rounded-[3px] border border-[#999] px-[6px] leading-[20px] whitespace-nowrap";
  return (
    <>
      <div className="flex h-[24px] items-center border-t border-[#dcdad7] bg-linear-to-b from-[#f3f2f1] to-[#e3e1de] pl-[8px]">
        <button type="button" aria-label="关闭附加组件栏">
          <CloseGlyph size={11} />
        </button>
      </div>
      <div className="flex h-[26px] items-center border-t border-[#222] bg-[#edecea] pr-[3px] pl-[2px] text-[14px]">
        <button type="button" aria-label="显示桌面">
          <svg width="20" height="20" viewBox="0 0 20 20">
            <rect x="0.7" y="0.7" width="18.6" height="18.6" rx="2" fill="#e4e6da" stroke="#777" />
            <path d="M3 5 H9 L10 6.5 H16 V15 H3 Z" fill="#c4c8b8" stroke="#6a6d60" />
            <circle cx="10.5" cy="11" r="2.6" fill="none" stroke="#6a6d60" />
          </svg>
        </button>
        <span className="mr-[4px] ml-[4px] flex">
          <GripDots />
        </span>
        <div className="flex gap-[2px]">
          <button type="button" className={`${task} bg-linear-to-b from-[#fbfbfa] to-[#e4e2df]`}>
            <TerminalIcon width={16} />
            <span>handle@handle-VirtualB…</span>
          </button>
          <button type="button" className={`${task} bg-linear-to-b from-[#c4c2bf] to-[#d2d0cd]`}>
            <FirefoxIcon size={17} />
            <span>桌面 @ Collabtive - Mozil…</span>
          </button>
          <button type="button" className={`${task} bg-linear-to-b from-[#fbfbfa] to-[#e4e2df]`}>
            <span className="flex opacity-60">
              <FolderIcon color="#d4d6cc" edge="#8c8f80" mark />
            </span>
            <span>[图片]</span>
          </button>
        </div>
        <div className="ml-auto flex items-center gap-[4px]">
          <button type="button" aria-label="工作区" className="flex h-[21px] w-[37px] items-center justify-center border border-[#888] bg-[#cfe0f5]">
            <FirefoxIcon size={17} />
          </button>
          <button type="button" aria-label="回收站">
            <svg width="19" height="21" viewBox="0 0 19 21">
              <path d="M1.5 4 L3 19.5 Q9.5 21.5 16 19.5 L17.5 4 Z" fill="#c9c9c6" stroke="#555" />
              <path d="M4 8 l10 10 M4 13 l6 6 M8 7 l8 8 M15 8 l-10 10 M10 7 l-7 7 M16 13 l-6 6" stroke="#888" strokeWidth="0.8" />
              <ellipse cx="9.5" cy="4" rx="8.5" ry="2.8" fill="#f4f4f2" stroke="#555" strokeWidth="1.3" />
              <path d="M5 4 L8 1 L13 4" fill="#fff" stroke="#999" />
            </svg>
          </button>
        </div>
      </div>
    </>
  );
}

export default function App() {
  return (
    <div className={`flex min-h-screen flex-col text-black ${UI}`}>
      <DesktopPanel />
      <TitleBar />
      <TabStrip />
      <NavBar />
      <BookmarkBar />
      <div className="flex flex-1">
        <Dashboard />
        <ScrollBar />
      </div>
      <TaskBar />
    </div>
  );
}
